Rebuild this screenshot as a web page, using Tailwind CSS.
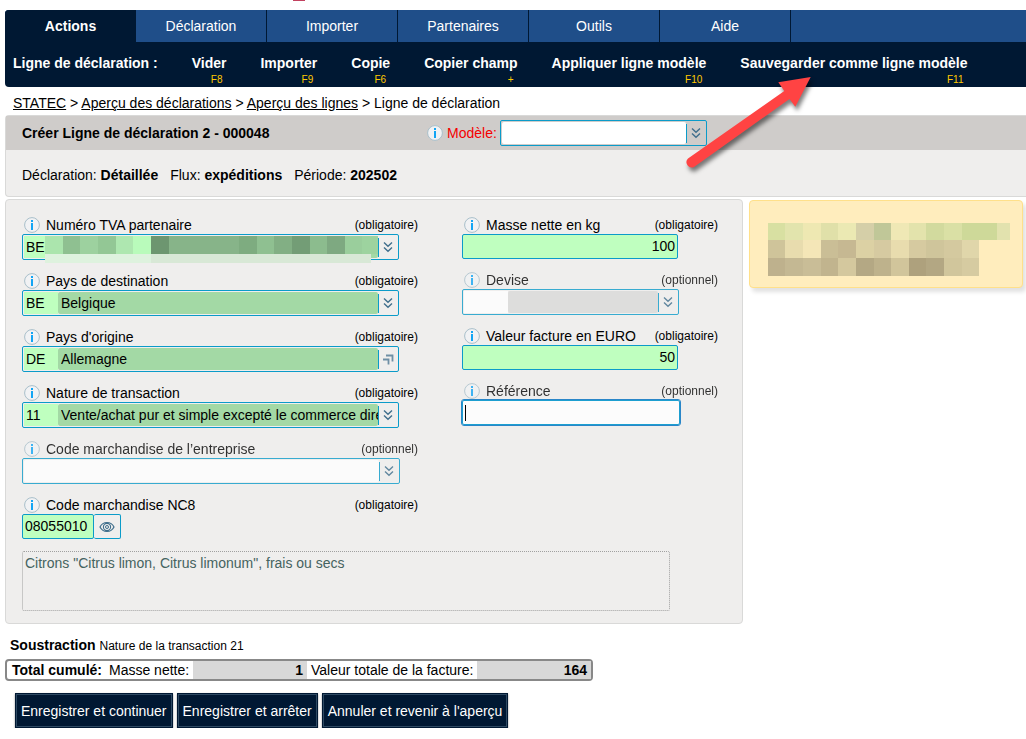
<!DOCTYPE html>
<html lang="fr">
<head>
<meta charset="utf-8">
<meta name="viewport" content="width=device-width, initial-scale=1">
<title>Ligne de déclaration</title>
<script src="https://cdn.jsdelivr.net/npm/@tailwindcss/browser@4"></script>
</head>
<body class="relative overflow-x-hidden bg-white font-['Liberation_Sans',Arial,sans-serif] text-sm leading-[18px] text-black">

<svg class="hidden" aria-hidden="true">
  <symbol id="info" viewBox="0 0 16 16"><circle cx="8" cy="8" r="7.400" fill="#f1f2f4" stroke="#a9bfca" stroke-width="1"/><path d="M7 3h2v2H7zM7 6h2v7H7z" fill="#12a5f4"/></symbol>
  <symbol id="down" viewBox="0 0 10 12"><path d="M1 1.500l4 3.700 4-3.700M1 6.500l4 3.700 4-3.700" fill="none" stroke="#3f6e8c" stroke-width="1.400"/></symbol>
  <symbol id="corner" viewBox="0 0 12 12"><path d="M4 2.500h6.500v6M1 6.500h5.500v5" fill="none" stroke="#6f8fa5" stroke-width="1.800"/></symbol>
  <symbol id="eye" viewBox="0 0 16 12"><path d="M1 6c3-6 11-6 14 0-3 6-11 6-14 0z" fill="none" stroke="#3f6e8c" stroke-width="1.200"/><circle cx="8" cy="6" r="3.600" fill="none" stroke="#3f6e8c" stroke-width="1.100"/><circle cx="8" cy="6" r="1.500" fill="none" stroke="#3f6e8c" stroke-width="1"/></symbol>
</svg>

<div class="h-[10px] pl-[293px]"><div class="h-px w-3 bg-[#c2415f]"></div></div>

<header class="ml-[5px] rounded-l bg-[#001833] text-white">
  <nav class="flex overflow-hidden rounded-tl bg-[#1f4e89] text-center leading-8">
    <a href="#" class="w-[131px] bg-[#001833] font-bold">Actions</a>
    <a href="#" class="w-[131px] border-r border-[#001833]">Déclaration</a>
    <a href="#" class="w-[131px] border-r border-[#001833]">Importer</a>
    <a href="#" class="w-[131px] border-r border-[#001833]">Partenaires</a>
    <a href="#" class="w-[131px] border-r border-[#001833]">Outils</a>
    <a href="#" class="w-[131px] border-r border-[#001833]">Aide</a>
  </nav>
  <nav class="flex h-[45px] gap-[34px] pt-3 pl-2 font-bold whitespace-nowrap">
    <span>Ligne de déclaration :</span>
    <a href="#" class="flex flex-col">Vider<small class="pr-1 text-right text-[10px] leading-4 font-normal text-[#ffc800]">F8</small></a>
    <a href="#" class="flex flex-col">Importer<small class="pr-1 text-right text-[10px] leading-4 font-normal text-[#ffc800]">F9</small></a>
    <a href="#" class="flex flex-col">Copie<small class="pr-1 text-right text-[10px] leading-4 font-normal text-[#ffc800]">F6</small></a>
    <a href="#" class="flex flex-col">Copier champ<small class="pr-1 text-right text-[10px] leading-4 font-normal text-[#ffc800]">+</small></a>
    <a href="#" class="flex flex-col">Appliquer ligne modèle<small class="pr-1 text-right text-[10px] leading-4 font-normal text-[#ffc800]">F10</small></a>
    <a href="#" class="flex flex-col">Sauvegarder comme ligne modèle<small class="pr-1 text-right text-[10px] leading-4 font-normal text-[#ffc800]">F11</small></a>
  </nav>
</header>

<div class="pt-[7px] pb-[3px] pl-[13px]">
  <a href="#" class="underline">STATEC</a> &gt; <a href="#" class="underline">Aperçu des déclarations</a> &gt; <a href="#" class="underline">Aperçu des lignes</a> &gt; Ligne de déclaration
</div>

<section class="ml-[5px] rounded-l border border-r-0 border-[#d9d9d8] bg-[#efeeed]">
  <div class="flex items-center bg-[#cfccca] py-1 pl-4">
    <h1 class="w-[405px] font-bold">Créer Ligne de déclaration 2 - 000048</h1>
    <svg class="mr-1 size-4"><use href="#info"/></svg>
    <label for="modele" class="mr-[3px] text-[#f50000]">Modèle:</label>
    <div class="flex h-[26px] w-[207px] items-center rounded-xs border border-[#0b9bc9] p-px">
      <select id="modele" class="h-full min-w-0 flex-1 appearance-none rounded-xs bg-white"><option></option></select>
      <span class="flex h-[19px] w-[19px] items-center justify-center border-l border-[#0b9bc9]"><svg class="h-3 w-[10px]"><use href="#down"/></svg></span>
    </div>
  </div>
  <p class="flex gap-3 pt-4 pb-3 pl-4"><span>Déclaration: <b>Détaillée</b></span><span>Flux: <b>expéditions</b></span><span>Période: <b>202502</b></span></p>
</section>

<main class="flex items-start gap-[6px] pt-[2px] pr-[3px] pl-[5px]">
  <form class="min-w-0 flex-1 rounded border border-[#d9d9d8] bg-[#efeeed] pt-4 pr-6 pb-3 pl-4">
    <div class="grid grid-cols-[minmax(0,396fr)_minmax(0,256fr)] gap-x-11">
      <div class="flex flex-col gap-3">
        <div>
          <div class="flex h-[18px] items-center"><svg class="mr-1 ml-[2px] size-4"><use href="#info"/></svg><label for="tva" class="flex-1 pl-[2px]">Numéro TVA partenaire</label><span class="text-xs">(obligatoire)</span></div>
          <div class="relative mr-[19px] flex h-[26px] items-center rounded-xs border border-[#0b9bc9] p-px">
            <input id="tva" value="BE" class="h-full w-[34px] bg-[#bfffbf] pb-px pl-[2px]">
            <span class="h-full flex-1 rounded-xs bg-[#a3d9a5]"></span>
            <button type="button" aria-label="Choisir un partenaire" class="flex h-[19px] w-[19px] items-center justify-center border-l border-[#0b9bc9]"><svg class="h-3 w-[10px]"><use href="#down"/></svg></button>
            <svg class="absolute top-px left-[22px] h-[27px] w-[333px]" viewBox="0 0 333 27" shape-rendering="crispEdges" aria-hidden="true">
              <path fill="#abe5ad" d="M0 0h18v18H0z"/><path fill="#8fc091" d="M18 0h17v18H18z"/><path fill="#9dd19f" d="M35 0h18v18H35z"/><path fill="#93c795" d="M53 0h18v18H53z"/><path fill="#aee7b0" d="M71 0h17v18H71z"/><path fill="#b9fbbb" d="M88 0h18v18H88z"/><path fill="#6d9670" d="M106 0h18v18h-18z"/><path fill="#87b489" d="M124 0h70v18h-70z"/><path fill="#7eac80" d="M194 0h18v18h-18z"/><path fill="#8fc091" d="M212 0h17v18h-17z"/><path fill="#82af84" d="M229 0h18v18h-18z"/><path fill="#739d76" d="M247 0h18v18h-18z"/><path fill="#8cbc8e" d="M265 0h17v18h-17z"/><path fill="#7ea981" d="M282 0h18v18h-18z"/><path fill="#9ace9c" d="M300 0h17v18h-17z"/><path fill="#9dd39f" d="M317 0h16v18h-16z"/>
              <path fill="#def2de" d="M0 18h106v9H0z"/><path fill="#d8e8d6" d="M106 18h220v9H106z"/>
            </svg>
          </div>
        </div>
        <div>
          <div class="flex h-[18px] items-center"><svg class="mr-1 ml-[2px] size-4"><use href="#info"/></svg><label for="dest" class="flex-1 pl-[2px]">Pays de destination</label><span class="text-xs">(obligatoire)</span></div>
          <div class="mr-[19px] flex h-[26px] items-center rounded-xs border border-[#0b9bc9] p-px">
            <input id="dest" value="BE" class="h-full w-[34px] bg-[#bfffbf] pb-px pl-[2px]">
            <select aria-label="Nom du pays de destination" class="h-full min-w-0 flex-1 appearance-none rounded-xs bg-[#a3d9a5] pb-px pl-[3px]"><option>Belgique</option></select>
            <span class="flex h-[19px] w-[19px] items-center justify-center border-l border-[#0b9bc9]"><svg class="h-3 w-[10px]"><use href="#down"/></svg></span>
          </div>
        </div>
        <div>
          <div class="flex h-[18px] items-center"><svg class="mr-1 ml-[2px] size-4"><use href="#info"/></svg><label for="orig" class="flex-1 pl-[2px]">Pays d'origine</label><span class="text-xs">(obligatoire)</span></div>
          <div class="mr-[19px] flex h-[26px] items-center rounded-xs border border-[#0b9bc9] p-px">
            <input id="orig" value="DE" class="h-full w-[34px] bg-[#bfffbf] pb-px pl-[2px]">
            <input aria-label="Nom du pays d'origine" value="Allemagne" class="h-full min-w-0 flex-1 rounded-xs bg-[#a3d9a5] pb-px pl-[3px]">
            <button type="button" aria-label="Ouvrir la liste des pays" class="flex h-[19px] w-[19px] items-center justify-center border-l border-[#0b9bc9]"><svg class="size-3"><use href="#corner"/></svg></button>
          </div>
        </div>
        <div>
          <div class="flex h-[18px] items-center"><svg class="mr-1 ml-[2px] size-4"><use href="#info"/></svg><label for="nature" class="flex-1 pl-[2px]">Nature de transaction</label><span class="text-xs">(obligatoire)</span></div>
          <div class="mr-[19px] flex h-[26px] items-center rounded-xs border border-[#0b9bc9] p-px">
            <input id="nature" value="11" class="h-full w-[34px] bg-[#bfffbf] pb-px pl-[2px]">
            <select aria-label="Description de la nature" class="h-full min-w-0 flex-1 appearance-none rounded-xs bg-[#a3d9a5] pb-px pl-[3px]"><option>Vente/achat pur et simple excepté le commerce direct</option></select>
            <span class="flex h-[19px] w-[19px] items-center justify-center border-l border-[#0b9bc9]"><svg class="h-3 w-[10px]"><use href="#down"/></svg></span>
          </div>
        </div>
        <div class="opacity-80">
          <div class="flex h-[18px] items-center"><svg class="mr-1 ml-[2px] size-4"><use href="#info"/></svg><label for="codeent" class="flex-1 pl-[2px]">Code marchandise de l’entreprise</label><span class="text-xs">(optionnel)</span></div>
          <div class="mr-[18px] flex h-[26px] items-center rounded-xs border border-[#0b9bc9] p-px">
            <select id="codeent" class="h-full min-w-0 flex-1 appearance-none rounded-xs bg-white"><option></option></select>
            <span class="flex h-[19px] w-[19px] items-center justify-center border-l border-[#0b9bc9]"><svg class="h-3 w-[10px]"><use href="#down"/></svg></span>
          </div>
        </div>
        <div>
          <div class="flex h-[18px] items-center"><svg class="mr-1 ml-[2px] size-4"><use href="#info"/></svg><label for="nc8" class="flex-1 pl-[2px]">Code marchandise NC8</label><span class="text-xs">(obligatoire)</span></div>
          <div class="flex h-[25px]">
            <input id="nc8" value="08055010" class="w-[72px] rounded-xs border border-[#0b9bc9] bg-[#bfffbf] pb-px pl-[2px]">
            <button type="button" aria-label="Voir les codes" class="flex w-[27px] items-center justify-center rounded-xs border border-l-0 border-[#0b9bc9]"><svg class="h-3 w-4"><use href="#eye"/></svg></button>
          </div>
        </div>
      </div>

      <div class="flex flex-col gap-3">
        <div>
          <div class="flex h-[18px] items-center"><svg class="mr-1 ml-[2px] size-4"><use href="#info"/></svg><label for="masse" class="flex-1 pl-[2px]">Masse nette en kg</label><span class="text-xs">(obligatoire)</span></div>
          <div class="mr-10 flex h-[25px]"><input id="masse" value="100" class="w-full rounded-xs border border-[#0b9bc9] bg-[#bfffbf] pr-[2px] pb-px text-right"></div>
        </div>
        <div class="opacity-80">
          <div class="flex h-[18px] items-center"><svg class="mr-1 ml-[2px] size-4"><use href="#info"/></svg><label for="devise" class="flex-1 pl-[2px]">Devise</label><span class="text-xs">(optionnel)</span></div>
          <div class="mr-[39px] flex h-[26px] items-center rounded-xs border border-[#0b9bc9] p-px">
            <input id="devise" class="h-full w-11 bg-white">
            <select aria-label="Nom de la devise" class="h-full min-w-0 flex-1 appearance-none rounded-xs bg-[#d9d9d9]"><option></option></select>
            <span class="flex h-[19px] w-[19px] items-center justify-center border-l border-[#0b9bc9]"><svg class="h-3 w-[10px]"><use href="#down"/></svg></span>
          </div>
        </div>
        <div>
          <div class="flex h-[18px] items-center"><svg class="mr-1 ml-[2px] size-4"><use href="#info"/></svg><label for="valeur" class="flex-1 pl-[2px]">Valeur facture en EURO</label><span class="text-xs">(obligatoire)</span></div>
          <div class="mr-10 flex h-[25px]"><input id="valeur" value="50" class="w-full rounded-xs border border-[#0b9bc9] bg-[#bfffbf] pr-[2px] pb-px text-right"></div>
        </div>
        <div>
          <div class="flex h-[18px] items-center opacity-80"><svg class="mr-1 ml-[2px] size-4"><use href="#info"/></svg><label for="ref" class="flex-1 pl-[2px]">Référence</label><span class="text-xs">(optionnel)</span></div>
          <div class="mr-[38px] flex h-[25px] items-center rounded-xs border border-[#1d9fd0] bg-[#fcfcfc] pl-[2px] outline outline-[#2a86c8]"><span class="h-4 w-px bg-black"></span><input id="ref" class="h-full min-w-0 flex-1 outline-none"></div>
        </div>
      </div>
    </div>
    <textarea readonly aria-label="Description du code NC8" class="mt-3 block h-[60px] w-[648px] max-w-full resize-none rounded-xs border border-dotted border-[#a0a0a0] px-[2px] pt-[2px] text-[#456360]">Citrons "Citrus limon, Citrus limonum", frais ou secs</textarea>
  </form>

  <aside class="mt-px w-[274px] shrink-0 rounded border border-[#ffe08a] bg-[#ffedbd] px-[18px] pt-[22px] pb-[11px] shadow-[3px_4px_4px_#0000001f]">
    <svg class="block h-[53px] w-[242px] max-w-none" viewBox="0 0 242 53" shape-rendering="crispEdges" aria-hidden="true">
      <path fill="#d8e0a2" d="M0 0h17v17H0z"/><path fill="#e2e4ad" d="M17 0h18v17H17z"/><path fill="#eee8b2" d="M35 0h18v17H35z"/><path fill="#e0e0a9" d="M53 0h17v17H53z"/><path fill="#ebe9b3" d="M70 0h18v17H70z"/><path fill="#d5cfa8" d="M88 0h18v17H88z"/><path fill="#c0c798" d="M106 0h17v17h-17z"/><path fill="#efe8b5" d="M123 0h18v17h-18z"/><path fill="#e3e3ac" d="M141 0h17v17h-17z"/><path fill="#d2da9e" d="M158 0h18v17h-18z"/><path fill="#dae0a5" d="M176 0h18v17h-18z"/><path fill="#ced999" d="M194 0h35v17h-35z"/><path fill="#e2e2ae" d="M229 0h13v17h-13z"/>
      <path fill="#cfc49a" d="M0 17h17v18H0z"/><path fill="#e8dcae" d="M17 17h18v18H17z"/><path fill="#f4e6b7" d="M35 17h18v18H35z"/><path fill="#cabe96" d="M53 17h17v18H53z"/><path fill="#c6b892" d="M70 17h18v18H70z"/><path fill="#dcd1a4" d="M88 17h18v18H88z"/><path fill="#d6caa1" d="M106 17h17v18h-17z"/><path fill="#e8dcae" d="M123 17h18v18h-18z"/><path fill="#d6caa0" d="M141 17h17v18h-17z"/><path fill="#cfc59b" d="M158 17h18v18h-18z"/><path fill="#d4c99f" d="M176 17h18v18h-18z"/><path fill="#e0d6aa" d="M194 17h17v18h-17z"/>
      <path fill="#beb18d" d="M0 35h17v18H0z"/><path fill="#c4b893" d="M17 35h18v18H17z"/><path fill="#c9bd97" d="M35 35h18v18H35z"/><path fill="#c1b48e" d="M53 35h17v18H53z"/><path fill="#d4c89e" d="M70 35h18v18H70z"/><path fill="#b4a884" d="M88 35h18v18H88z"/><path fill="#beb28c" d="M106 35h17v18h-17z"/><path fill="#d1c59b" d="M123 35h18v18h-18z"/><path fill="#aea17d" d="M141 35h17v18h-17z"/><path fill="#b3a783" d="M158 35h18v18h-18z"/><path fill="#d1c69c" d="M176 35h18v18h-18z"/><path fill="#d6cba1" d="M194 35h17v18h-17z"/>
    </svg>
  </aside>
</main>

<footer class="pt-3 pl-[5px]">
  <p class="pl-[5px]"><b>Soustraction</b> <span class="text-xs">Nature de la transaction 21</span></p>
  <div class="mt-[5px] flex w-[588px] max-w-full rounded border-2 border-[#888] pl-[5px] leading-[18px]">
    <b class="w-[97px]">Total cumulé:</b>
    <span class="w-[84px]">Masse nette:</span>
    <output class="flex-1 bg-[#d8d8d8] pr-1 text-right font-bold">1</output>
    <span class="w-[170px] pl-1">Valeur totale de la facture:</span>
    <output class="flex-1 bg-[#d8d8d8] pr-1 text-right font-bold">164</output>
  </div>
  <div class="mt-3 flex gap-1 pl-[10px] text-white">
    <button class="h-[35px] border border-[#001833] bg-[#001833] px-[5px] shadow-[inset_0_0_0_1px_#2f4a63,0_1px_2px_#00000066]">Enregistrer et continuer</button>
    <button class="h-[35px] border border-[#001833] bg-[#001833] px-[5px] shadow-[inset_0_0_0_1px_#2f4a63,0_1px_2px_#00000066]">Enregistrer et arrêter</button>
    <button class="h-[35px] border border-[#001833] bg-[#001833] px-[5px] shadow-[inset_0_0_0_1px_#2f4a63,0_1px_2px_#00000066]">Annuler et revenir à l'aperçu</button>
  </div>
</footer>

<!-- Annotation arrow pointing at "Sauvegarder comme ligne modèle" -->
<svg class="pointer-events-none absolute top-[70px] left-[680px] h-[110px] w-[140px] drop-shadow-[2px_4px_2px_#00000080]" viewBox="0 0 140 110" aria-hidden="true">
  <path fill="#ff4343" d="M130.700 7L98.300 12.300l6 8.700L8 88.500a5.300 5.300 0 0 0 6 8.500L109.500 29l5.800 7.700z"/>
</svg>
</body>
</html>
